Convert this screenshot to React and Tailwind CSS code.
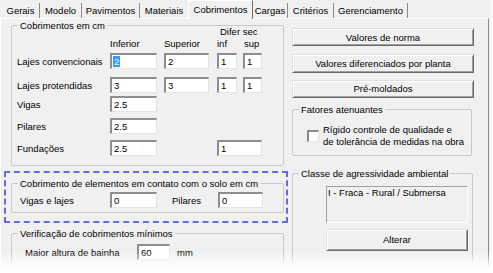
import React from "react";

function GroupBox({ title, className = "", children }) {
  return (
    <div className={`relative border border-[#c9c9c9] rounded-[2px] ${className}`}>
      <span className="absolute -top-[6px] left-[6px] px-[2px] bg-[#f0f0f0] leading-[11px] whitespace-nowrap">
        {title}
      </span>
      {children}
    </div>
  );
}

function Field({ className = "", value, selected = false }) {
  return (
    <div
      className={`h-[16px] shrink-0 bg-white border-t-2 border-l-2 border-r border-b border-t-[#8e8e8e] border-l-[#8e8e8e] border-r-[#e4e4e4] border-b-[#e4e4e4] flex items-center pl-[1px] leading-[11px] ${className}`}
    >
      {selected ? (
        <span className="bg-[#3399ff] text-white px-[1px]">{value}</span>
      ) : (
        <span className="px-[1px]">{value}</span>
      )}
    </div>
  );
}

function Btn({ className = "", children }) {
  return (
    <div
      className={`h-[22px] flex items-center justify-center bg-[#f0f0f0] border-t border-l border-r border-b border-t-[#e0e0e0] border-l-[#e0e0e0] border-r-[#696969] border-b-[#696969] shadow-[inset_1px_1px_0_#ffffff,inset_-1px_-1px_0_#a0a0a0] ${className}`}
    >
      {children}
    </div>
  );
}

function Tab({ className = "", children }) {
  return (
    <div className={`mt-[3px] h-[15px] flex items-center justify-center shrink-0 ${className}`}>
      {children}
    </div>
  );
}

export default function App() {
  return (
    <div className="relative w-[493px] h-[273px] overflow-hidden bg-[#f0f0f0] text-black text-[9.5px] leading-[11px] font-['Liberation_Sans',Arial,sans-serif]">
      {/* Tab strip */}
      <div className="flex items-start h-[18px] pl-[2px]">
        <Tab className="w-[38px] border-r border-r-[#8c8c8c]">Gerais</Tab>
        <Tab className="w-[42px] border-r border-r-[#8c8c8c]">Modelo</Tab>
        <Tab className="w-[58px] border-r border-r-[#8c8c8c]">Pavimentos</Tab>
        <Tab className="w-[48px]">Materiais</Tab>
        <div className="relative z-10 w-[65px] h-[19px] shrink-0 flex justify-center pt-[3px] bg-[#f0f0f0] border-t border-l border-r border-t-white border-l-white border-r-[#6f6f6f]">
          Cobrimentos
        </div>
        <Tab className="w-[35px] border-r border-r-[#8c8c8c]">Cargas</Tab>
        <Tab className="w-[46px] border-r border-r-[#8c8c8c]">Critérios</Tab>
        <Tab className="w-[74px] border-r border-r-[#8c8c8c]">Gerenciamento</Tab>
      </div>

      {/* Panel */}
      <div className="flex w-[489px] h-[255px] border-t border-l border-r border-t-white border-l-white border-r-[#8a8a8a]">
        {/* Left column */}
        <div className="w-[288px] shrink-0 flex flex-col">
          <GroupBox title="Cobrimentos em cm" className="ml-[10px] mt-[6px] w-[273px] h-[141px] shrink-0">
            <div className="pl-[5px]">
              <div className="flex mt-[1px] h-[10px] leading-[10px]">
                <div className="w-[203px]" />
                <span>Difer sec</span>
              </div>
              <div className="flex mt-[2px] h-[10px] leading-[10px]">
                <div className="w-[93px]" />
                <div className="w-[54px]">Inferior</div>
                <div className="w-[53px]">Superior</div>
                <div className="w-[27px]">inf</div>
                <div>sup</div>
              </div>
              <div className="flex items-center mt-[4px]">
                <div className="w-[93px]">Lajes convencionais</div>
                <Field className="w-[47px]" value="2" selected />
                <Field className="w-[45px] ml-[7px]" value="2" />
                <Field className="w-[20px] ml-[8px]" value="1" />
                <Field className="w-[19px] ml-[6px]" value="1" />
              </div>
              <div className="flex items-center mt-[8px]">
                <div className="w-[93px]">Lajes protendidas</div>
                <Field className="w-[47px]" value="3" />
                <Field className="w-[45px] ml-[7px]" value="3" />
                <Field className="w-[20px] ml-[8px]" value="1" />
                <Field className="w-[19px] ml-[6px]" value="1" />
              </div>
              <div className="flex items-center mt-[3px]">
                <div className="w-[93px]">Vigas</div>
                <Field className="w-[47px]" value="2.5" />
              </div>
              <div className="flex items-center mt-[6px]">
                <div className="w-[93px]">Pilares</div>
                <Field className="w-[47px]" value="2.5" />
              </div>
              <div className="flex items-center mt-[6px]">
                <div className="w-[93px]">Fundações</div>
                <Field className="w-[47px]" value="2.5" />
                <Field className="w-[45px] ml-[60px]" value="1" />
              </div>
            </div>
          </GroupBox>

          <div className="ml-[3px] mt-[5px] w-[284px] h-[52px] shrink-0 border-2 border-dashed border-[#6b6bd8] flex flex-col">
            <GroupBox
              title="Cobrimento de elementos em contato com o solo em cm"
              className="ml-[5px] mt-[10px] w-[273px] h-[30px] shrink-0"
            >
              <div className="flex items-center mt-[8px] pl-[8px]">
                <div className="w-[90px]">Vigas e lajes</div>
                <Field className="w-[47px]" value="0" />
                <div className="w-[46px] ml-[15px]">Pilares</div>
                <Field className="w-[45px]" value="0" />
              </div>
            </GroupBox>
          </div>

          <GroupBox title="Verificação de cobrimentos mínimos" className="ml-[10px] mt-[10px] w-[273px] h-[60px] shrink-0">
            <div className="flex items-center mt-[10px] pl-[13px]">
              <div className="w-[112px]">Maior altura de bainha</div>
              <Field className="w-[33px]" value="60" />
              <span className="ml-[7px]">mm</span>
            </div>
          </GroupBox>
        </div>

        {/* Right column */}
        <div className="flex flex-col pl-[3px]">
          <Btn className="mt-[9px] w-[182px]">Valores de norma</Btn>
          <Btn className="mt-[8px] w-[182px]">Valores diferenciados por planta</Btn>
          <Btn className="mt-[7px] w-[182px]">Pré-moldados</Btn>

          <GroupBox title="Fatores atenuantes" className="mt-[11px] w-[180px] h-[47px] shrink-0">
            <div className="flex items-center mt-[14px] pl-[14px]">
              <div className="w-[12px] h-[12px] shrink-0 bg-white border-t-2 border-l-2 border-r border-b border-t-[#8a8a8a] border-l-[#8a8a8a] border-r-[#e4e4e4] border-b-[#e4e4e4]" />
              <div className="ml-[4px] leading-[12px]">
                Rígido controle de qualidade e
                <br />
                de tolerância de medidas na obra
              </div>
            </div>
          </GroupBox>

          <GroupBox title="Classe de agressividade ambiental" className="mt-[17px] w-[181px] h-[100px] shrink-0">
            <div className="ml-[33px] mt-[12px] w-[142px] h-[37px] border-t border-l border-r border-b border-t-[#a0a0a0] border-l-[#a0a0a0] border-r-white border-b-white pl-[1px]">
              I - Fraca - Rural / Submersa
            </div>
            <Btn className="ml-[33px] mt-[6px] w-[142px]">Alterar</Btn>
          </GroupBox>
        </div>
      </div>

      {/* fade effects */}
      <div className="absolute left-0 right-0 top-[252px] h-[21px] bg-linear-to-b from-white/0 to-white to-75% pointer-events-none" />
      <div className="absolute right-0 top-0 bottom-0 w-[4px] bg-linear-to-r from-white/0 to-white pointer-events-none" />
    </div>
  );
}
